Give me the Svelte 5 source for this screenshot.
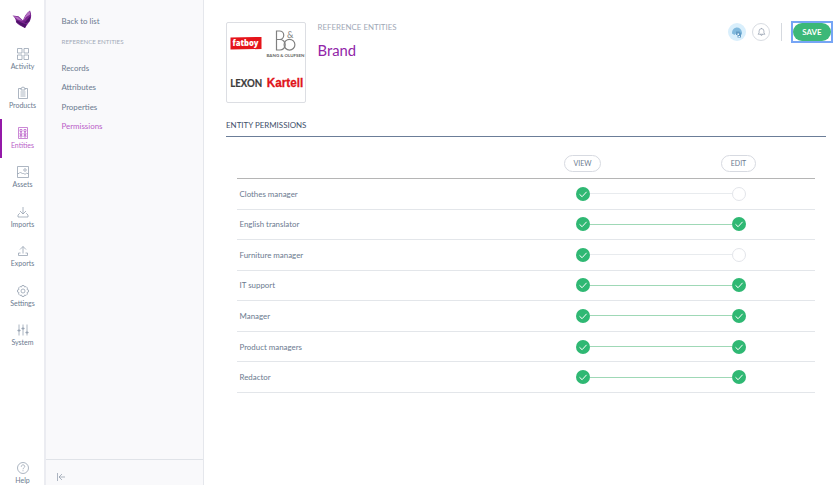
<script>
  const nav = ['Activity', 'Products', 'Entities', 'Assets', 'Imports', 'Exports', 'Settings', 'System'];
  const links = ['Records', 'Attributes', 'Properties', 'Permissions'];
  const rows = [
    { name: 'Clothes manager', edit: false },
    { name: 'English translator', edit: true },
    { name: 'Furniture manager', edit: false },
    { name: 'IT support', edit: true },
    { name: 'Manager', edit: true },
    { name: 'Product managers', edit: true },
    { name: 'Redactor', edit: true }
  ];
</script>

{#snippet icon(name)}
  <svg class="icon" viewBox="0 0 24 24">
    {#if name === 'Activity'}
      <path d="M1 1h9v9H1zM14 1h9v9h-9zM1 14h9v9H1zM14 14h9v9h-9z" />
    {:else if name === 'Products'}
      <path d="M8 3H3v20h18V3h-5M8 2h2a2 2 0 0 1 4 0h2v4H8zM7 10h10M7 14h10M7 18h10" />
    {:else if name === 'Entities'}
      <path d="M3 1h18v22H3zM6 5h4v4H6zM14 5h4v4h-4zM8 9v3M16 9v3M6 12h4v3H6zM14 12h4v3h-4zM6 17h4v3H6zM14 17h4v3h-4z" />
    {:else if name === 'Assets'}
      <path d="M1 1h22v22H1zM1 15l3 0 3-3 4 4 2-2 3 3 3-3 4 2" /><circle cx="16" cy="8" r="2.5" />
    {:else if name === 'Imports'}
      <path d="M12 2v14M6 10l6 6 6-6M6 15H5l-3 3v4h20v-4l-3-3h-1" />
    {:else if name === 'Exports'}
      <path d="M12 17V3M6 9l6-6 6 6M7 16H3v5h18v-5h-4" />
    {:else if name === 'Settings'}
      <path d="M10 1h4l1 3 3-1 3 3-1 3 3 1v4l-3 1 1 3-3 3-3-1-1 3h-4l-1-3-3 1-3-3 1-3-3-1v-4l3-1-1-3 3-3 3 1z" /><circle cx="12" cy="12" r="4" />
    {:else if name === 'System'}
      <path d="M4 1v10M4 15v8M12 1v6M12 11v12M20 1v14M20 19v4M1 13h6M9 9h6M17 17h6" />
      <path d="M2.500 11.500h3v3h-3zM10.500 7.500h3v3h-3zM18.500 15.500h3v3h-3z" />
    {:else}
      <circle cx="12" cy="12" r="11" /><path d="M8.500 9.500c0-5 7-5 7-.5 0 2.500-3.500 2.500-3.500 5.500M12 16.500v2" />
    {/if}
  </svg>
{/snippet}

{#snippet dot(on)}
  <span class="dot" class:on>
    {#if on}<svg viewBox="0 0 14 14"><path d="M3.500 7.300l2.600 2.400 4.500-4.900" /></svg>{/if}
  </span>
{/snippet}

<div class="page">
  <nav class="main-nav">
    <svg class="logo" viewBox="0 0 20 20">
      <path fill="#7a2590" d="M.5 6.500l6 .8 4.500 4.200c1-3.500 3-7 7-10 1.500 3 1.500 7 .3 9.500-1.200 3-3.800 5-5.300 8-3.500-1.500-7-3-9-6 .2-2.500-1.500-5-3.500-6.500z" />
      <path fill="#4e126a" d="M4 13l9 6 1.500-3.500L9 13.500l-4-2.200zM11 11.500l2 1.500 5.500-6-1 5.500-4 2z" />
      <path fill="#b673c4" d="M11.500 11.500c1-4 3-7 6-9.500l.7 3.500-4 2.500zM1.500 7l4.500 1 4.500 4-5-1.500z" />
    </svg>
    {#each nav as n}
      <div class="item" class:active={n === 'Entities'}>{@render icon(n)}<span>{n}</span></div>
    {/each}
    <div class="item help">{@render icon('Help')}<span>Help</span></div>
  </nav>

  <aside>
    <div class="back">Back to list</div>
    <div class="group">REFERENCE ENTITIES</div>
    {#each links as l}<div class="link" class:current={l === 'Permissions'}>{l}</div>{/each}
    <div class="collapse">
      <svg viewBox="0 0 8 8"><path d="M.5 0v8M2 4h6M5 1L2 4l3 3" /></svg>
    </div>
  </aside>

  <main>
    <header>
      <div class="picture">
        <svg viewBox="0 0 78 78">
          <path fill="#e5141b" d="M3.500 13.500l31-.5v12l-31 .6z" />
          <text x="5.500" y="22.300" fill="#fff" font-family="Open Sans, sans-serif" font-size="8.500" font-weight="800" textLength="26" lengthAdjust="spacingAndGlyphs">fatboy</text>
          <g fill="none" stroke="#808080" stroke-width="1.200">
            <path d="M49.500 6.500v20M49.500 7h3a4 4 0 0 1 0 8.500h-3M50 15.500h3a5 5 0 0 1 0 10.500h-3.500" />
            <circle cx="62.500" cy="20.700" r="5.400" />
          </g>
          <text x="60" y="13.500" fill="#808080" font-family="Lato, sans-serif" font-size="9" textLength="6.500" lengthAdjust="spacingAndGlyphs">&amp;</text>
          <text x="39.500" y="32.500" fill="#666" font-family="Lato, sans-serif" font-size="4.300" font-weight="700" textLength="38" lengthAdjust="spacingAndGlyphs">BANG &amp; OLUFSEN</text>
          <text x="3.200" y="63" fill="#3c3c3c" font-family="Lato, sans-serif" font-size="11" font-weight="700" stroke="#3c3c3c" stroke-width=".2" textLength="32" lengthAdjust="spacingAndGlyphs">LEXON</text>
          <text x="39.800" y="63.200" fill="#e0141b" stroke="#e0141b" stroke-width=".3" font-family="Liberation Sans, sans-serif" font-size="12.500" font-weight="700" textLength="36.500" lengthAdjust="spacingAndGlyphs">Kartell</text>
        </svg>
      </div>
      <div class="title">
        <div class="crumb">REFERENCE ENTITIES</div>
        <h1>Brand</h1>
      </div>
      <div class="actions">
        <svg class="avatar" viewBox="0 0 18 18">
          <circle cx="9" cy="9" r="9" fill="#d9effc" />
          <path fill="#81b9dd" d="M4 10.500C4 3 13 2.500 14 9.500v2h-2l-1-1-2 1-1-1-1.500 1.500z" />
          <path fill="#629bc4" d="M8 8.500h3.500l1.500 2v4h-3.500v-2.500H8z" />
          <path fill="#eef8ff" d="M9.500 10.500h1.500v1.500h-1.500zM10.500 13h1.500v1h-1.500z" />
        </svg>
        <span class="bell"><svg viewBox="0 0 10 10"><path d="M1.200 7.500h7.600L7.700 6V4a2.700 2.700 0 0 0-5.400 0v2zM4 7.500c0 1.800 2 1.800 2 0M5 .5v1" /></svg></span>
        <span class="sep"></span>
        <span class="focus"><button>SAVE</button></span>
      </div>
    </header>

    <h2>ENTITY PERMISSIONS</h2>

    <div class="table">
      <div class="head">
        <div class="view"><span class="pill">VIEW</span></div>
        <div class="edit"><span class="pill narrow">EDIT</span></div>
      </div>
      {#each rows as r}
        <div class="row">
          <span class="name">{r.name}</span>
          <div class="track">
            {@render dot(true)}<span class="line" class:on={r.edit}></span>{@render dot(r.edit)}
          </div>
        </div>
      {/each}
    </div>
  </main>
</div>

<style>
  .page { display: flex; width: 840px; height: 485px; overflow: hidden; background: #fff; font-family: Lato, "Liberation Sans", sans-serif; font-size: 7.900px; color: #6b7a8f; box-sizing: border-box; }
  .page :global(*) { box-sizing: border-box; }
  svg { display: block; overflow: visible; }
  .main-nav { width: 46px; flex: none; border-right: 2px solid #ebecf1; display: flex; flex-direction: column; }
  .logo { width: 20px; height: 20px; margin: 9px 0 10.500px 12px; flex: none; }
  .item { height: 39.550px; flex: none; display: flex; flex-direction: column; align-items: center; padding: 8px 1px 0 0; border-left: 2px solid transparent; font-size: 7px; line-height: 9px; }
  .item span { margin-top: 2px; }
  .icon { width: 12px; height: 12px; fill: none; stroke: #929eae; stroke-width: 1.500; }
  .active { border-color: #9419a8; color: #b960c8; }
  .active .icon { stroke: #b960c8; }
  .help { margin-top: auto; height: 31px; }
  aside { width: 158px; flex: none; background: #f9f9fb; border-right: 1px solid #e5e7ec; display: flex; flex-direction: column; }
  .back { padding: 16px 0 0 15.500px; line-height: 10px; }
  .group { padding: 12px 0 0 15.500px; font-size: 6.200px; line-height: 8px; color: #a3abb9; margin-bottom: 13px; }
  .link { height: 19.300px; line-height: 19.300px; padding-left: 15.500px; }
  .current { color: #b960c8; }
  .collapse { margin-top: auto; height: 26px; border-top: 1px solid #e0e3e8; padding: 13px 0 0 11px; }
  .collapse svg { width: 8px; height: 8px; fill: none; stroke: #8c98a8; stroke-width: .7; }
  main { flex: 1; padding: 22px 14px 0 22px; }
  header { display: flex; height: 81px; }
  .picture { width: 80px; height: 81px; border: 1px solid #dcdee3; border-radius: 2px; padding: .5px 0; }
  .picture svg { width: 78px; height: 78px; }
  .title { padding: 0 0 0 11.500px; }
  .crumb { font-size: 7.900px; line-height: 10px; color: #a1a9b7; }
  h1 { margin: 10px 0 0; font-size: 14.800px; line-height: 17px; font-weight: 400; color: #9125a8; }
  .actions { margin: -2px -7px 0 auto; display: flex; align-items: center; height: 23px; }
  .avatar { width: 18px; height: 18px; }
  .bell { width: 18px; height: 18px; margin-left: 6px; border: 1px solid #d8dce2; border-radius: 50%; display: flex; align-items: center; justify-content: center; }
  .bell svg { width: 9px; height: 10px; fill: none; stroke: #8491a2; stroke-width: .7; }
  .sep { width: 1px; height: 18px; background: #d5d9df; margin: 0 9px 0 11px; }
  .focus { border: 2px solid #76a5f5; width: 42px; height: 22px; padding: 0; display: flex; }
  button { width: 38px; height: 18px; border: 0; border-radius: 9px; background: #3cb878; color: #fff; font: 700 7.900px Lato, sans-serif; padding: 0; }
  h2 { margin: 16px 0 0; height: 17.500px; font-size: 7.950px; line-height: 12px; font-weight: 400; color: #3e506a; border-bottom: 1px solid #6b7d98; }
  .table { margin: 0 11px; }
  .head { height: 42.500px; display: flex; border-bottom: 1px solid #b5b5b5; padding: 18px 0 0 327px; }
  .view { width: 157px; }
  .pill { display: flex; width: 37px; height: 17px; border: 1px solid #d7dae1; border-radius: 9px; align-items: center; justify-content: center; font-size: 7px; line-height: 8px; }
  .narrow { width: 35px; }
  .row { height: 30.550px; display: flex; align-items: center; border-bottom: 1px solid #e3e6ea; padding-left: 2.500px; }
  .name { width: 336.500px; }
  .track { display: flex; align-items: center; width: 170px; }
  .dot { width: 14px; height: 14px; flex: none; border: 1px solid #e3e5ea; border-radius: 50%; }
  .dot.on { border: 0; background: #2fb873; }
  .dot svg { width: 14px; height: 14px; fill: none; stroke: #fff; stroke-width: 1; }
  .line { flex: 1; height: 1px; background: #e8ebee; }
  .line.on { background: #9fd8b6; }
</style>
